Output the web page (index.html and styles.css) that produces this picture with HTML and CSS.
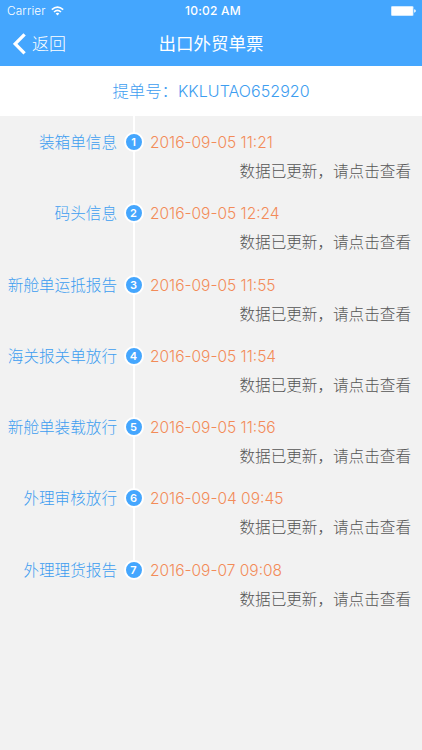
FILE: index.html
```html
<!DOCTYPE html>
<html lang="zh-CN">
<head>
<meta charset="utf-8">
<title>出口外贸单票</title>
<link rel="stylesheet" href="styles.css">
</head>
<body>
<header class="header">
  <div class="status">
    <div class="carrier"><span>Carrier</span>
      <svg width="13" height="10" viewBox="0 0 13 10"><g fill="none" stroke="#fff" stroke-width="1.6"><path d="M.8 3.6Q6.5-1.4 12.2 3.6"/><path d="M3 6Q6.5 2.8 10 6"/></g><path d="M4.7 7.4Q6.5 6 8.3 7.4L6.5 9.4Z" fill="#fff"/></svg>
    </div>
    <span class="clock">10:02 AM</span>
    <svg class="battery" width="25" height="10" viewBox="0 0 25 10"><rect width="22.5" height="10" rx="1.2" fill="#fff" opacity=".65"/><rect x=".7" y=".7" width="21.1" height="8.6" rx=".7" fill="#fff"/><path d="M23.2 3.3Q24.8 3.6 24.8 5T23.2 6.7Z" fill="#fff"/></svg>
  </div>
  <nav class="nav">
    <a class="back"><svg width="13" height="22" viewBox="0 0 13 22"><path d="M11.6 1.3 2.2 10.8 11.6 20.3" fill="none" stroke="#fff" stroke-width="3.3"/></svg><span>返回</span></a>
    <h1>出口外贸单票</h1>
  </nav>
</header>
<section class="bill"><span>提单号：</span><span class="number">KKLUTAO652920</span></section>
<main class="timeline">
  <article class="event"><h2>装箱单信息</h2><div class="rail"><b>1</b></div><div class="info"><time>2016-09-05 11:21</time><p>数据已更新，请点击查看</p></div></article>
  <article class="event"><h2>码头信息</h2><div class="rail"><b>2</b></div><div class="info"><time>2016-09-05 12:24</time><p>数据已更新，请点击查看</p></div></article>
  <article class="event"><h2>新舱单运抵报告</h2><div class="rail"><b>3</b></div><div class="info"><time>2016-09-05 11:55</time><p>数据已更新，请点击查看</p></div></article>
  <article class="event"><h2>海关报关单放行</h2><div class="rail"><b>4</b></div><div class="info"><time>2016-09-05 11:54</time><p>数据已更新，请点击查看</p></div></article>
  <article class="event"><h2>新舱单装载放行</h2><div class="rail"><b>5</b></div><div class="info"><time>2016-09-05 11:56</time><p>数据已更新，请点击查看</p></div></article>
  <article class="event"><h2>外理审核放行</h2><div class="rail"><b>6</b></div><div class="info"><time>2016-09-04 09:45</time><p>数据已更新，请点击查看</p></div></article>
  <article class="event"><h2>外理理货报告</h2><div class="rail"><b>7</b></div><div class="info"><time>2016-09-07 09:08</time><p>数据已更新，请点击查看</p></div></article>
</main>
</body>
</html>
```
FILE: styles.css
```css
* { box-sizing: border-box; }
body { margin: 0; height: 750px; overflow: hidden; background: #f2f2f2; font-family: Inter, "Noto Sans CJK SC", sans-serif; }
h1, h2, p { margin: 0; font-weight: 300; }
svg { display: block; flex: none; }
.header { height: 66px; background: #44a6fe; color: #fff; }
.status { height: 22px; padding: 0 6px 0 7px; display: grid; grid-template-columns: 1fr auto 1fr; align-items: center; font-size: 12px; line-height: 22px; }
.carrier { display: flex; align-items: center; gap: 5px; }
.carrier span { font-size: 11.8px; font-weight: 350; letter-spacing: .15px; }
.clock { padding-left: 3px; font-weight: 500; letter-spacing: .25px; }
.battery { justify-self: end; }
.nav { height: 44px; padding: 0 13px; display: grid; grid-template-columns: 1fr auto 1fr; align-items: center; }
.back { display: flex; align-items: center; gap: 6px; font-size: 17px; font-weight: 300; line-height: 42px; }
.nav h1 { font-size: 17.5px; font-weight: 400; line-height: 42px; }
.bill { height: 50px; display: flex; justify-content: center; background: #fff; color: #3d9df0; font-size: 16.4px; font-weight: 300; line-height: 51px; }
.number { font-size: 16px; font-weight: 350; letter-spacing: .05px; }
.timeline { height: 634px; }
.event { height: 71.3px; display: grid; grid-template-columns: 117px 33px 1fr; }
.event h2 { color: #3d9df0; font-size: 15.6px; line-height: 53px; text-align: right; white-space: nowrap; }
.rail { display: flex; justify-content: center; align-items: flex-start; padding-top: 16px; background: linear-gradient(#fff, #fff) 16px 0 / 2px 100% no-repeat; }
.event:last-child .rail { background-size: 2px 26px; }
.rail b { width: 20px; height: 20px; border: 2px solid #fff; border-radius: 50%; background: #44a6fe; color: #fff; font-size: 11px; font-weight: 600; line-height: 16px; text-align: center; }
.info { padding-right: 11px; }
.info time { display: block; height: 41px; color: #f38b58; font-size: 15.5px; font-weight: 350; letter-spacing: 0; line-height: 53px; white-space: nowrap; }
.info p { color: #555; font-size: 15.6px; line-height: 30px; text-align: right; white-space: nowrap; }
```
